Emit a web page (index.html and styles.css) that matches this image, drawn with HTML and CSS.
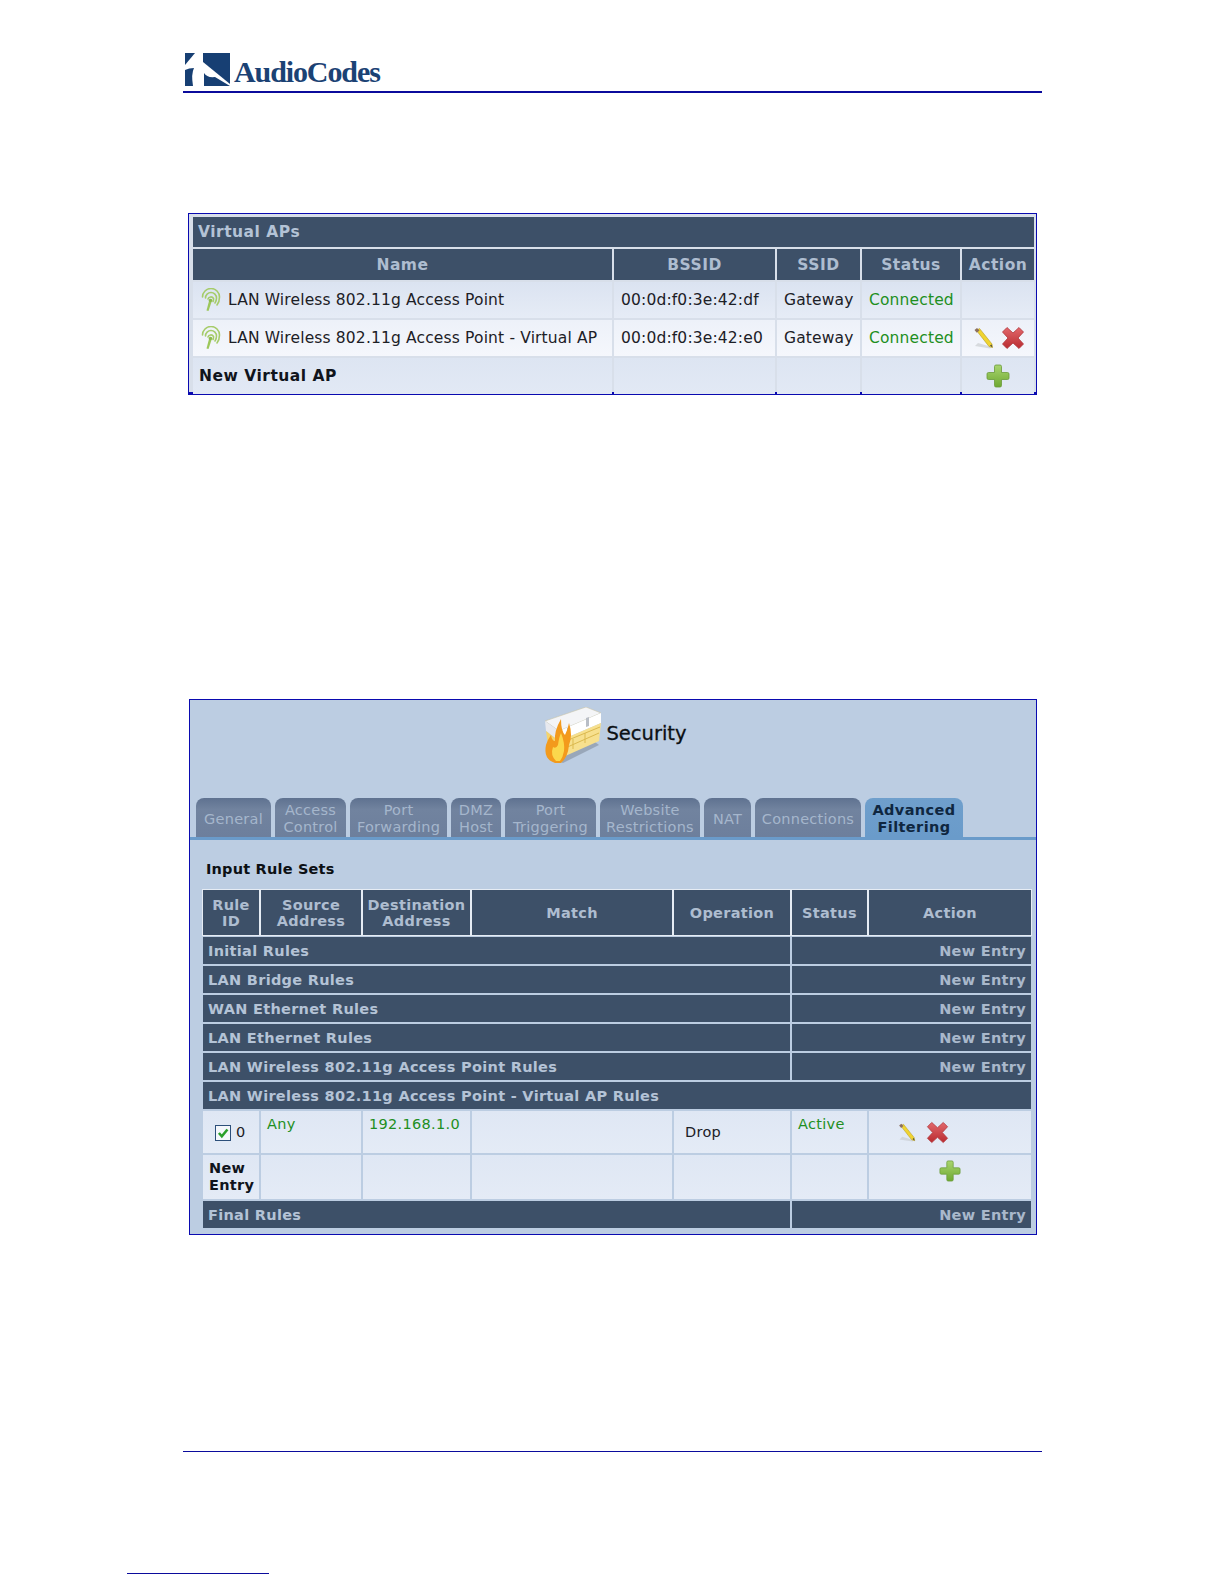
FILE: index.html
```html
<!DOCTYPE html>
<html lang="en">
<head>
<meta charset="utf-8">
<title>AudioCodes</title>
<link rel="stylesheet" href="styles.css">
</head>
<body>
<svg class="defs" width="0" height="0" aria-hidden="true">
  <defs>
    <linearGradient id="gx" x1="0" y1="0" x2="0" y2="1"><stop offset="0" stop-color="#e2686c"/><stop offset="1" stop-color="#b92b30"/></linearGradient>
    <linearGradient id="gp" x1="0" y1="0" x2="0" y2="1"><stop offset="0" stop-color="#a9d56f"/><stop offset="1" stop-color="#6ea832"/></linearGradient>
    <symbol id="i-pencil" viewBox="0 0 22 22">
      <path d="M3 19 L18 21.5 L20 20 L6 16Z" fill="#c4c8cc" opacity=".6"/>
      <path d="M4.5 3.5 L7.5 1.5 L20 17 L20.5 20.5 L17 19.5Z" fill="#f0d430" stroke="#b59a20" stroke-width=".6"/>
      <path d="M2.5 3 L5 1 L7.5 3.5 L4.8 5.8Z" fill="#8b6f5e"/>
      <path d="M18 18.5 L20.5 20.5 L19.5 17.5Z" fill="#444"/>
    </symbol>
    <symbol id="i-x" viewBox="0 0 24 24">
      <path d="M1.5 6 L6 1.5 L12 7 L18 1.5 L22.5 6 L17 12 L22.5 18 L18 22.5 L12 17 L6 22.5 L1.5 18 L7 12Z" fill="url(#gx)" stroke="#b03338" stroke-width=".8" stroke-linejoin="round"/>
    </symbol>
    <symbol id="i-plus" viewBox="0 0 24 24">
      <path d="M8.5 2.5 Q8.5 1 10 1 H14 Q15.5 1 15.5 2.5 V8.5 H21.5 Q23 8.5 23 10 V14 Q23 15.5 21.5 15.5 H15.5 V21.5 Q15.5 23 14 23 H10 Q8.5 23 8.5 21.5 V15.5 H2.5 Q1 15.5 1 14 V10 Q1 8.5 2.5 8.5 H8.5Z" fill="url(#gp)" stroke="#6a9b38" stroke-width=".8"/>
    </symbol>
    <symbol id="i-wifi" viewBox="0 0 22 24">
      <g fill="none" stroke="#a6cc6a" stroke-width="1.6" stroke-linecap="round">
        <path d="M2.5 9 A8.5 8.5 0 0 1 19.5 9 Q19.5 14 17 17"/>
        <path d="M5.5 10 A5.5 5.5 0 0 1 16.5 10 Q16.5 13 15 15"/>
        <path d="M8 11 A3 3 0 0 1 13.5 10.5 Q13.8 12 13 13.5"/>
      </g>
      <path d="M9 13 L11.5 14 L8.5 23 L6.5 22.5Z" fill="#9cc75a"/>
      <circle cx="10.5" cy="12.5" r="1.8" fill="#8dbb4c"/>
    </symbol>
  </defs>
</svg>

<div class="page">
  <header class="doc-head">
    <div class="logo">
      <svg class="logo-mark" viewBox="0 0 45 33" aria-hidden="true">
        <path fill="#173f73" d="M0 0H10L0 12Z"/>
        <path fill="#173f73" d="M18 0H45V31L18 9Z"/>
        <path fill="#173f73" d="M0 17Q4 15 9 15Q6 21 8 33H0Z"/>
        <path fill="#173f73" d="M19 20Q22 25 30 24L45 33H19Z"/>
      </svg>
      <span class="logo-text">AudioCodes</span>
    </div>
  </header>

  <main class="doc-body">
    <section class="shot shot-ap">
      <table class="tbl ap-tbl">
        <colgroup><col class="c-name"><col class="c-bssid"><col class="c-ssid"><col class="c-status"><col class="c-action"></colgroup>
        <thead>
          <tr class="ap-title"><th colspan="5">Virtual APs</th></tr>
          <tr class="ap-head"><th>Name</th><th>BSSID</th><th>SSID</th><th>Status</th><th>Action</th></tr>
        </thead>
        <tbody>
          <tr class="ap-row">
            <td class="name"><svg class="ic-wifi"><use href="#i-wifi"/></svg>LAN Wireless 802.11g Access Point</td>
            <td>00:0d:f0:3e:42:df</td><td>Gateway</td><td class="green">Connected</td><td></td>
          </tr>
          <tr class="ap-row alt">
            <td class="name"><svg class="ic-wifi"><use href="#i-wifi"/></svg>LAN Wireless 802.11g Access Point - Virtual AP</td>
            <td>00:0d:f0:3e:42:e0</td><td>Gateway</td><td class="green">Connected</td>
            <td class="act"><svg class="ic-pencil"><use href="#i-pencil"/></svg><svg class="ic-x"><use href="#i-x"/></svg></td>
          </tr>
          <tr class="ap-row last">
            <td class="bold">New Virtual AP</td><td></td><td></td><td></td>
            <td class="act center"><svg class="ic-plus"><use href="#i-plus"/></svg></td>
          </tr>
        </tbody>
      </table>
    </section>

    <section class="shot shot-sec">
      <div class="sec-title">
        <svg class="fw" viewBox="0 0 62 58" aria-hidden="true">
          <path d="M6 50 L22 56 L58 38 L50 32Z" fill="#8a97a8" opacity=".7"/>
          <path d="M4 14 L18 24 L60 6 L45 0Z" fill="#f4f5f7" stroke="#c9c5a8" stroke-width=".6"/>
          <path d="M4 14 L18 24 L18 34 L5 24Z" fill="#e8e9ee"/>
          <path d="M18 24 L60 6 L60 16 L18 34Z" fill="#ffffff"/>
          <path d="M45 11 L48 10 L48 19 L45 20Z" fill="#b9bec6"/>
          <path d="M26 21 L29 20 L29 30 L26 31Z" fill="#b9bec6"/>
          <path d="M5 24 L18 34 L22 50 L8 44Z" fill="#f5d46c"/>
          <path d="M18 34 L60 16 L58 34 L22 50Z" fill="#f7e08e"/>
          <path d="M22 42 L58 26 M20 36 L59 20 M32 32 V42 M44 26 V36" stroke="#dbb94f" stroke-width="1" fill="none"/>
          <path d="M14 56 Q2 52 5 38 Q7 32 10 28 Q11 34 14 34 Q13 24 20 12 Q20 24 24 28 Q27 22 28 16 Q32 28 28 38 Q27 50 20 56Z" fill="#f39a1c"/>
          <path d="M15 54 Q9 48 12 40 Q15 42 17 38 Q18 30 20 26 Q24 36 23 44 Q22 50 19 54Z" fill="#fbd84c"/>
        </svg>
        <span class="sec-name">Security</span>
      </div>

      <nav class="tabs">
        <a class="tab t-general">General</a>
        <a class="tab t-access">Access<br>Control</a>
        <a class="tab t-fwd">Port<br>Forwarding</a>
        <a class="tab t-dmz">DMZ<br>Host</a>
        <a class="tab t-trig">Port<br>Triggering</a>
        <a class="tab t-web">Website<br>Restrictions</a>
        <a class="tab t-nat">NAT</a>
        <a class="tab t-conn">Connections</a>
        <a class="tab active t-adv">Advanced<br>Filtering</a>
      </nav>

      <h3 class="rules-title">Input Rule Sets</h3>
      <table class="tbl rule-tbl">
        <colgroup><col class="r-id"><col class="r-src"><col class="r-dst"><col class="r-match"><col class="r-op"><col class="r-st"><col class="r-act"></colgroup>
        <thead>
          <tr class="rule-head"><th>Rule<br>ID</th><th>Source<br>Address</th><th>Destination<br>Address</th><th>Match</th><th>Operation</th><th>Status</th><th>Action</th></tr>
        </thead>
        <tbody>
          <tr class="bar"><td colspan="5">Initial Rules</td><td colspan="2" class="entry">New Entry</td></tr>
          <tr class="bar"><td colspan="5">LAN Bridge Rules</td><td colspan="2" class="entry">New Entry</td></tr>
          <tr class="bar"><td colspan="5">WAN Ethernet Rules</td><td colspan="2" class="entry">New Entry</td></tr>
          <tr class="bar"><td colspan="5">LAN Ethernet Rules</td><td colspan="2" class="entry">New Entry</td></tr>
          <tr class="bar"><td colspan="5">LAN Wireless 802.11g Access Point Rules</td><td colspan="2" class="entry">New Entry</td></tr>
          <tr class="bar"><td colspan="7">LAN Wireless 802.11g Access Point - Virtual AP Rules</td></tr>
          <tr class="data">
            <td class="idcell"><span class="check"><svg viewBox="0 0 12 12"><path d="M2.5 6 L5 8.8 L9.8 3" fill="none" stroke="#2aa02a" stroke-width="2.2"/></svg></span>0</td>
            <td class="green top">Any</td><td class="green top">192.168.1.0</td><td></td><td class="drop">Drop</td><td class="green top">Active</td>
            <td class="rule-act"><svg class="ic-pencil2"><use href="#i-pencil"/></svg><svg class="ic-x2"><use href="#i-x"/></svg></td>
          </tr>
          <tr class="data new">
            <td class="bold">New<br>Entry</td><td></td><td></td><td></td><td></td><td></td>
            <td class="center plus-cell"><svg class="ic-plus2"><use href="#i-plus"/></svg></td>
          </tr>
          <tr class="bar"><td colspan="5">Final Rules</td><td colspan="2" class="entry">New Entry</td></tr>
        </tbody>
      </table>
    </section>
  </main>

  <footer class="doc-foot"></footer>
  <div class="note-rule"></div>
</div>
</body>
</html>
```

FILE: styles.css
```css
* { box-sizing: border-box; }
html, body { margin: 0; padding: 0; background: #fff; }
body { font-family: "DejaVu Sans", Verdana, sans-serif; color: #111; }
.defs { display: block; height: 0; }
.page { width: 1224px; height: 1584px; overflow: hidden; display: flex; flex-direction: column; }

/* document header */
.doc-head { margin: 0 182px 0 183px; height: 93px; padding: 53px 0 0 2px; border-bottom: 2px solid #0b0b9c; }
.logo { display: flex; align-items: flex-start; }
.logo-mark { width: 45px; height: 33px; display: block; }
.logo-text { font: bold 30px/32px "Liberation Serif", serif; color: #1b4274; letter-spacing: -1.1px; margin: 3px 0 0 4px; }

.doc-body { display: flex; flex-direction: column; }

/* screenshots */
.shot { background: #c5d2e4; border: 1px solid #0a0ab0; }
.shot-ap { margin: 120px 0 0 188px; width: 849px; height: 182px; padding: 1px 1px 0 2px; border-width: 1px 1px 3px 1px; background: #d8dfea; }
.shot-sec { margin: 304px 0 0 189px; width: 848px; height: 536px; background: #bccde2; }

/* tables */
.tbl { border-collapse: separate; border-spacing: 2px; table-layout: fixed; }
.tbl th { font-weight: bold; }
.green { color: #1e8f22; }
.bold { font-weight: bold; color: #10141c; }
.center { text-align: center; }

.ap-tbl { width: 845px; border-spacing: 2px 2px; margin: 0; font-size: 16px; letter-spacing: .15px; }
.c-name { width: 419px; } .c-bssid { width: 161px; } .c-ssid { width: 83px; } .c-status { width: 98px; } .c-action { width: 72px; }
.ap-title th { background: #3d5068; color: #b4c3d6; height: 30px; padding: 0 0 0 5px; text-align: left; font-size: 15.5px; letter-spacing: .5px; }
.ap-head th { background: #3d5068; color: #aebdd0; height: 31px; padding: 0; text-align: center; font-size: 15.5px; letter-spacing: .5px; }
.ap-row td { background: linear-gradient(#dbe3f1, #e6ecf6); height: 36px; padding: 0 0 0 7px; font-size: 15.5px; white-space: nowrap; overflow: hidden; color: #1c2026; }
.ap-row.alt td { background: linear-gradient(#edf1f9, #f5f7fc); }
.ap-row.last td { background: linear-gradient(#dde5f2, #e2e9f5); height: 36px; }
.ap-row td.name { padding-left: 7px; }
.ap-row td.bold { color: #10141c; padding-left: 6px; letter-spacing: .5px; }
.ap-row td.green { color: #1e8f22; }
.ic-wifi { width: 22px; height: 24px; vertical-align: middle; margin-right: 6px; }
.act { padding: 0 0 0 10px !important; }
.act.center { padding: 0 !important; }
.ic-pencil { width: 22px; height: 22px; vertical-align: middle; margin-right: 7px; }
.ic-x { width: 24px; height: 24px; vertical-align: middle; }
.ic-plus { width: 24px; height: 24px; vertical-align: middle; }

/* security title */
.sec-title { height: 98px; display: flex; justify-content: center; align-items: flex-start; padding: 7px 0 0 2px; }
.fw { width: 62px; height: 58px; }
.sec-name { font-size: 19.5px; font-weight: bold; font-weight: 500; line-height: 24px; margin: 15px 0 0 3px; color: #0c1014; -webkit-text-stroke: .3px #0c1014; }

/* tabs */
.tabs { display: flex; gap: 4px; height: 42px; padding-left: 6px; border-bottom: 3px solid #6a9bca; }
.tab { display: block; height: 39px; padding-top: 4px; border-radius: 8px 8px 0 0; background: linear-gradient(#5f7290, #71839f 30%, #6d7f9c); color: #a5b6cc; font-size: 14.5px; line-height: 16.5px; text-align: center; letter-spacing: .25px; white-space: nowrap; }
.t-general, .t-nat, .t-conn { padding-top: 13px; }
.t-general { width: 75px; } .t-access { width: 71px; } .t-fwd { width: 97px; } .t-dmz { width: 50px; } .t-trig { width: 91px; } .t-web { width: 100px; } .t-nat { width: 47px; } .t-conn { width: 106px; } .t-adv { width: 98px; }
.tab.active { background: linear-gradient(#6f9fcc, #6a9bca); color: #0f2740; font-weight: bold; letter-spacing: .4px; }

.rules-title { margin: 0; height: 49px; padding: 20px 0 0 16px; font-size: 14.5px; line-height: 18px; font-weight: bold; color: #0c1014; letter-spacing: .2px; }

.rule-tbl { width: 832px; margin-left: 11px; font-size: 14.5px; letter-spacing: .3px; border-spacing: 2px 2px; margin-top: -1px; }
.r-id { width: 56px; } .r-src { width: 100px; } .r-dst { width: 107px; } .r-match { width: 200px; } .r-op { width: 116px; } .r-st { width: 75px; } .r-act { width: 162px; }
.rule-head th { background: #3d5068; color: #aebdd0; height: 45px; padding: 0; text-align: center; line-height: 16px; outline: 1px solid #e6ecf4; outline-offset: 0; }
.bar td { background: #3d5068; color: #b4c3d6; font-weight: bold; height: 27px; padding: 0 5px; white-space: nowrap; }
.bar td.entry { text-align: right; color: #a9b8cb; }
.rule-tbl .bar td + td { padding-left: 0; }
.data td { background: linear-gradient(#dfe7f4, #e4ebf6); height: 42px; padding: 0 6px; color: #1c2026; }
.data.new td { height: 44px; line-height: 17px; }
.data td.bold { color: #10141c; padding-left: 6px; }
.data td.green { color: #1e8f22; }
.top { vertical-align: top; padding-top: 5px !important; }
.idcell { padding-left: 12px !important; white-space: nowrap; }
.check { display: inline-block; width: 16px; height: 16px; border: 1px solid #2c4f7a; background: #f4f7fb; vertical-align: middle; margin-right: 5px; }
.check svg { display: block; width: 14px; height: 14px; }
.drop { padding-left: 11px !important; }
.rule-act { padding: 0 0 0 28px !important; white-space: nowrap; }
.ic-pencil2 { width: 19px; height: 21px; vertical-align: middle; margin-right: 10px; }
.ic-x2 { width: 23px; height: 23px; vertical-align: middle; }
.plus-cell { padding: 0 0 13px 0 !important; }
.ic-plus2 { width: 22px; height: 22px; vertical-align: middle; }

/* document footer */
.doc-foot { margin: 216px 182px 0 183px; border-top: 1px solid #0b0b9c; height: 0; }
.note-rule { margin: 121px 0 0 127px; width: 142px; border-top: 1px solid #0b0b9c; }
```
